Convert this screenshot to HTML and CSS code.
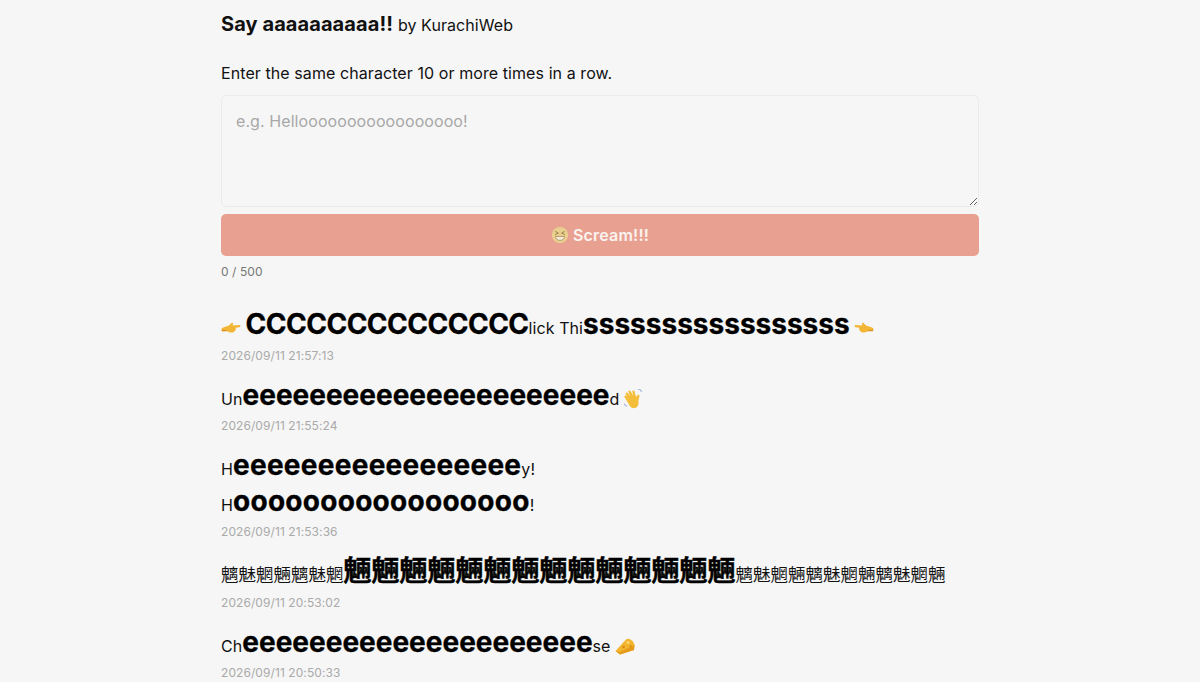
FILE: index.html
```html
<!DOCTYPE html>
<html lang="en">
<head>
    <meta charset="UTF-8">
    <meta name="viewport" content="width=device-width, initial-scale=1.0">
    <title>Say aaaaaaaaaa!!</title>
    <link rel="stylesheet" href="styles.css">
</head>
<body>

    <main class="container">
        <h1 class="title">Say aaaaaaaaaa!! <small>by KurachiWeb</small></h1>
        <p class="lead">Enter the same character 10 or more times in a row.</p>

        <form class="post-form">
            <textarea class="post-input" placeholder="e.g. Hellooooooooooooooooo!"></textarea>
            <button class="scream" type="button">
                <svg class="emoji" viewBox="0 0 20 20">
                    <circle cx="10" cy="10" r="9" fill="#e9d08f"/>
                    <path d="M4.600 6l3.600 1.900-3.600 1.700M15.400 6l-3.600 1.900 3.600 1.700" fill="none" stroke="#97784a" stroke-width="1"/>
                    <path d="M5 11.600h10c0 2.800-2.200 4.400-5 4.400s-5-1.600-5-4.400z" fill="#f4ecd8" stroke="#97784a" stroke-width=".7"/>
                </svg>
                Scream!!!
            </button>
            <div class="counter">0 / 500</div>
        </form>

        <ul class="posts">
            <li class="post post-tall">
                <div class="post-text">
                    <svg class="emoji" viewBox="0 0 20 20">
                        <path d="M.5 11.500c0-1 .6-1.800 1.600-2L8 7.500 10.500 5c.8-.5 1.800.2 1.500 1.200L11.500 7.500l6.800-.6c1.300 0 1.500 2 .2 2.300l-4 .6c.7 1 .4 2.400-.6 3-.6 1.300-2 1.900-3.500 1.800-2.200 0-4-.8-5.200-2L2 13.500c-1 0-1.500-1-1.500-2z" fill="#f2b534"/>
                        <path d="M.8 12.200c1.500.9 3.200.3 5 .4" fill="none" stroke="#d98f1c" stroke-width="1.200"/>
                    </svg>
                    <b class="tight">CCCCCCCCCCCCCC</b>lick Thi<b>sssssssssssssssss</b>
                    <svg class="emoji" viewBox="0 0 20 20">
                        <path d="M19.500 11.500c0-1-.6-1.800-1.600-2L12 7.500 9.500 5c-.8-.5-1.800.2-1.500 1.200L8.500 7.500l-6.800-.6c-1.300 0-1.500 2-.2 2.300l4 .6c-.7 1-.4 2.400.6 3 .6 1.300 2 1.900 3.500 1.800 2.200 0 4-.8 5.200-2l3.200-.1c1 0 1.500-1 1.500-2z" fill="#f2b534"/>
                        <path d="M19.200 12.200c-1.500.9-3.200.3-5 .4" fill="none" stroke="#d98f1c" stroke-width="1.200"/>
                    </svg>
                </div>
                <time class="post-date">2026/09/11 21:57:13</time>
            </li>
            <li class="post">
                <div class="post-text">
                    Un<b>eeeeeeeeeeeeeeeeeeeeee</b>d
                    <svg class="emoji" viewBox="1 1.500 18 18">
                        <path d="M5 14.500 1.500 9c-.7-1.100.8-2.200 1.700-1.200l.8 1-1.400-2.600c-.6-1.200 1-2.100 1.800-1L6.600 8 5 4.200c-.5-1.300 1.300-2 1.900-.8L9.200 7.600 8.500 4c-.2-1.300 1.600-1.700 2-.4l1.300 5.100 1.200-1.600c.9-1.100 2.400-.1 1.900 1l-1 4.300c.8 3-.5 5.700-3.200 6.300-2.400.5-4.400-1-5.700-4.200z" fill="#f4bd3a"/>
                        <path d="M13.500 1.500c1.600.2 2.800 1.100 3.400 2.500M1 14.500c.6 1.400 1.500 2.200 2.800 2.700" fill="none" stroke="#a9b8de" stroke-width="1.100"/>
                    </svg>
                </div>
                <time class="post-date">2026/09/11 21:55:24</time>
            </li>
            <li class="post">
                <div class="post-text">H<b class="wide">eeeeeeeeeeeeeeeee</b>y!</div>
                <div class="post-text">H<b class="wide">ooooooooooooooooo</b>!</div>
                <time class="post-date">2026/09/11 21:53:36</time>
            </li>
            <li class="post">
                <div class="post-text cjk">魑魅魍魎魑魅魍<b>魎魎魎魎魎魎魎魎魎魎魎魎魎魎</b>魑魅魍魎魑魅魍魎魑魅魍魎</div>
                <time class="post-date">2026/09/11 20:53:02</time>
            </li>
            <li class="post">
                <div class="post-text">
                    Ch<b>eeeeeeeeeeeeeeeeeeeee</b>se
                    <svg class="emoji" viewBox="0 0 20 20">
                        <path d="M.5 15 11 3.500c1.500-1 3-.9 4.500 0 2 1.300 3.500 3.200 4 5.500l-.5 5L5 18.500z" fill="#f3b52e"/>
                        <path d="M.5 15l4.500 1 14.500-7-.5 5L5 18.500z" fill="#e59a1a"/>
                        <circle cx="13" cy="6.500" r="1.600" fill="#fbd66a"/>
                        <circle cx="8.500" cy="11" r="1.300" fill="#d98c14"/>
                        <circle cx="15.500" cy="10" r="1.100" fill="#d98c14"/>
                    </svg>
                </div>
                <time class="post-date">2026/09/11 20:50:33</time>
            </li>
        </ul>
    </main>

</body>
</html>
```

FILE: styles.css
```css
* {
    box-sizing: border-box;
}
html, body {
    height: 682px;
    overflow: hidden;
}
body {
    margin: 0;
    background-color: #f6f6f6;
    color: #111;
    font-family: Inter, "Noto Sans CJK JP", sans-serif;
    font-size: 16px;
    letter-spacing: .08px;
}
.container {
    width: 758px;
    margin: 0 auto;
    padding-top: 11px;
}
.title {
    margin: 0;
    font-size: 20px;
    line-height: 26px;
    font-weight: 700;
}
.title small {
    font-size: 16px;
    font-weight: 400;
}
.lead {
    margin: 24px 0 0;
    line-height: 22px;
}
.post-form {
    margin-top: 11px;
}
.post-input {
    display: block;
    width: 100%;
    height: 112px;
    padding: 14px;
    border: 1px solid #ebebeb;
    border-radius: 5px;
    background: #f6f6f6;
    font-family: inherit;
    font-size: 16px;
    line-height: 22px;
    letter-spacing: .08px;
}
.post-input::placeholder {
    color: #a8a8a8;
}
.scream {
    display: flex;
    align-items: center;
    justify-content: center;
    gap: 4px;
    width: 100%;
    height: 42px;
    margin-top: 7px;
    border: 0;
    border-radius: 5px;
    background: #e8a191;
    color: #fbf3ef;
    font-family: inherit;
    font-size: 16px;
    font-weight: 600;
    letter-spacing: .2px;
}
.scream .emoji {
    width: 18px;
    height: 18px;
}
.counter {
    margin-top: 8px;
    color: #777;
    font-size: 12px;
    line-height: 15px;
}
.posts {
    margin: 31px 0 0;
    padding: 0;
    list-style: none;
}
.post {
    margin-bottom: 16px;
}
.post-text {
    font-size: 16px;
    line-height: 34px;
    white-space: nowrap;
}
.post-text + .post-text {
    margin-top: 1px;
}
.post-tall .post-text {
    line-height: 36px;
}
.post-text b {
    font-size: 28px;
    line-height: 1;
    font-weight: 700;
    letter-spacing: 0;
    color: #000;
    -webkit-text-stroke: .3px #000;
}
.post-text .tight {
    letter-spacing: -.5px;
}
.post-text .wide {
    letter-spacing: .28px;
}
.cjk {
    margin-top: 1px;
    font-size: 17.5px;
    line-height: 30px;
    letter-spacing: 0;
}
.cjk b {
    -webkit-text-stroke: .5px #000;
}
.emoji {
    display: inline-block;
    width: 20px;
    height: 20px;
    vertical-align: -4px;
}
.post-date {
    display: block;
    margin-top: 1px;
    color: #aaa;
    font-size: 12px;
    line-height: 18px;
}
.cjk + .post-date {
    margin-top: 4px;
}
```
